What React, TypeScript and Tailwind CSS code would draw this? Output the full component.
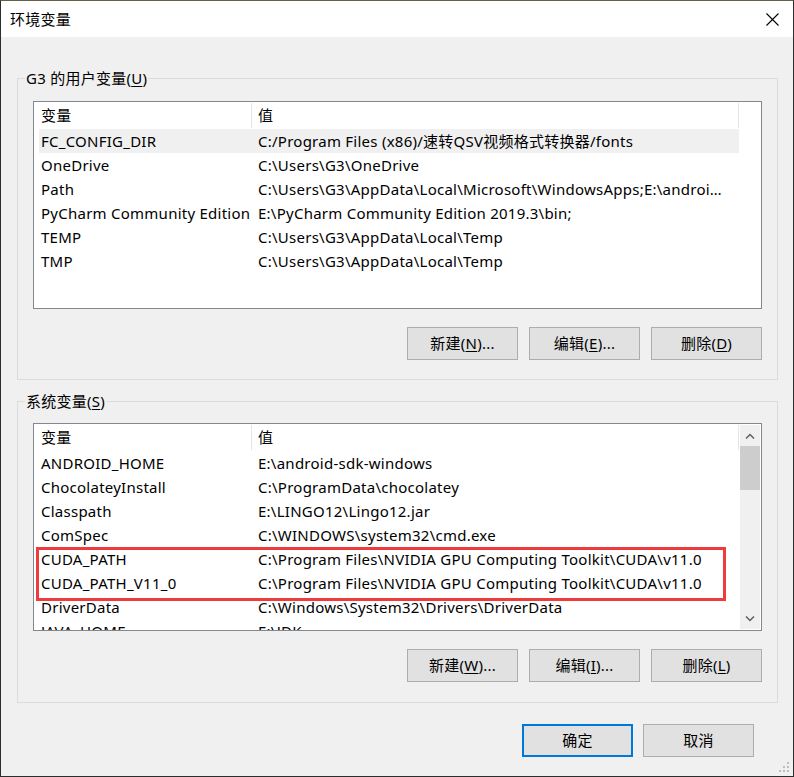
import React from 'react';

const userVars = [
    { name: 'FC_CONFIG_DIR', value: 'C:/Program Files (x86)/速转QSV视频格式转换器/fonts' },
    { name: 'OneDrive', value: 'C:\\Users\\G3\\OneDrive' },
    { name: 'Path', value: 'C:\\Users\\G3\\AppData\\Local\\Microsoft\\WindowsApps;E:\\android-sdk-windows\\platform-tools;C:\\Users\\G3\\AppData' },
    { name: 'PyCharm Community Edition', value: 'E:\\PyCharm Community Edition 2019.3\\bin;' },
    { name: 'TEMP', value: 'C:\\Users\\G3\\AppData\\Local\\Temp' },
    { name: 'TMP', value: 'C:\\Users\\G3\\AppData\\Local\\Temp' },
];

const sysVars = [
    { name: 'ANDROID_HOME', value: 'E:\\android-sdk-windows' },
    { name: 'ChocolateyInstall', value: 'C:\\ProgramData\\chocolatey' },
    { name: 'Classpath', value: 'E:\\LINGO12\\Lingo12.jar' },
    { name: 'ComSpec', value: 'C:\\WINDOWS\\system32\\cmd.exe' },
    { name: 'CUDA_PATH', value: 'C:\\Program Files\\NVIDIA GPU Computing Toolkit\\CUDA\\v11.0' },
    { name: 'CUDA_PATH_V11_0', value: 'C:\\Program Files\\NVIDIA GPU Computing Toolkit\\CUDA\\v11.0' },
    { name: 'DriverData', value: 'C:\\Windows\\System32\\Drivers\\DriverData' },
    { name: 'JAVA_HOME', value: 'E:\\JDK' },
];

function Chevron({ up }: { up?: boolean }) {
    return (
        <svg width="10" height="6" viewBox="0 0 10 6">
            <path
                d={up ? 'M1 5.5 L5 1.5 L9 5.5' : 'M1 0.5 L5 4.5 L9 0.5'}
                fill="none"
                stroke="#606060"
                strokeWidth="1.5"
            />
        </svg>
    );
}

function VarList({
    rows,
    selected,
    scroll,
    children,
}: {
    rows: { name: string; value: string }[];
    selected?: number;
    scroll?: boolean;
    children?: React.ReactNode;
}) {
    return (
        <div className="relative mx-[15px] h-[208px] border border-[#828790] bg-white flex overflow-hidden">
            <div className="w-[705px] shrink-0 flex flex-col">
                {/* Header */}
                <div className="h-[27px] shrink-0 flex">
                    <div className="w-[218px] h-[25px] mt-[1px] border-r border-[#e5e5e5] pl-[7px] flex items-center">变量</div>
                    <div className="flex-1 h-[25px] mt-[1px] border-r border-[#e5e5e5] pl-[6px] flex items-center">值</div>
                </div>
                {rows.map((r, i) => (
                    <div
                        key={r.name}
                        className={`ml-[5px] h-[24px] shrink-0 flex items-center ${i === selected ? 'bg-[#f0f0f0]' : ''}`}
                    >
                        <div className="w-[213px] shrink-0 pl-[2px] whitespace-nowrap overflow-hidden">{r.name}</div>
                        <div className="flex-1 min-w-0 pl-[6px] pr-[8px] whitespace-nowrap overflow-hidden text-ellipsis">{r.value}</div>
                    </div>
                ))}
            </div>
            {scroll ? (
                <div className="w-[20px] my-[1px] ml-[1px] bg-[#f0f0f0] flex flex-col">
                    <div className="h-[21px] flex items-center justify-center">
                        <Chevron up />
                    </div>
                    <div className="h-[44px] bg-[#cdcdcd]" />
                    <div className="flex-1" />
                    <div className="h-[21px] flex items-center justify-center">
                        <Chevron />
                    </div>
                </div>
            ) : null}
            {children}
        </div>
    );
}

function Btn({ label, hot, tail, primary }: { label: string; hot?: string; tail?: string; primary?: boolean }) {
    return (
        <div
            className={`w-[111px] h-[33px] bg-[#e1e1e1] flex items-center justify-center ${
                primary ? 'border-2 border-[#0078d7]' : 'border border-[#adadad]'
            }`}
        >
            <span>
                {label}
                {hot ? (
                    <>
                        (<span className="underline underline-offset-2">{hot}</span>)
                    </>
                ) : null}
                {tail}
            </span>
        </div>
    );
}

function Group({ title, hot, children }: { title: string; hot: string; children: React.ReactNode }) {
    return (
        <div className="border border-[#dcdcdc] flex flex-col">
            <div className="self-start -mt-[11px] ml-[7px] h-[20px] px-[1px] bg-[#f0f0f0] flex items-center leading-none">
                {title}(<span className="underline underline-offset-2">{hot}</span>)
            </div>
            {children}
        </div>
    );
}

export default function App() {
    return (
        <div className="w-[794px] h-[777px] border border-[#2d2d2d] border-t-[#675f46] bg-[#f0f0f0] flex flex-col text-[15px] tracking-[0.25px] text-black font-['Noto_Sans','Noto_Sans_CJK_SC',sans-serif] relative overflow-hidden">
            {/* Title bar */}
            <div className="h-[36px] shrink-0 bg-white flex items-center justify-between pl-[9px] pr-[14px]">
                <span>环境变量</span>
                <svg width="13" height="13" viewBox="0 0 13 13">
                    <path d="M0.5 0.5 L12.5 12.5 M12.5 0.5 L0.5 12.5" stroke="#000" strokeWidth="1.1" />
                </svg>
            </div>

            <div className="flex flex-col pl-[16px] pr-[15px] pt-[41px]">
                <Group title="G3 的用户变量" hot="U">
                    <div className="mt-[13px]">
                        <VarList rows={userVars} selected={0} />
                    </div>
                    <div className="mt-[18px] mr-[15px] pb-[19px] flex justify-end gap-[11px]">
                        <Btn label="新建" hot="N" tail="..." />
                        <Btn label="编辑" hot="E" tail="..." />
                        <Btn label="删除" hot="D" />
                    </div>
                </Group>

                <div className="mt-[21px]">
                    <Group title="系统变量" hot="S">
                        <div className="mt-[12px]">
                            <VarList rows={sysVars} scroll>
                                {/* annotation box */}
                                <div className="absolute left-[2px] top-[123px] w-[690px] h-[54px] border-[3px] border-[#ee3b3b] pointer-events-none" />
                            </VarList>
                        </div>
                        <div className="mt-[18px] mr-[15px] pb-[20px] flex justify-end gap-[11px]">
                            <Btn label="新建" hot="W" tail="..." />
                            <Btn label="编辑" hot="I" tail="..." />
                            <Btn label="删除" hot="L" />
                        </div>
                    </Group>
                </div>

                <div className="mt-[21px] mr-[24px] flex justify-end gap-[10px]">
                    <div className="h-[34px] flex">
                        <Btn label="确定" primary />
                    </div>
                    <div className="h-[34px] flex">
                        <Btn label="取消" />
                    </div>
                </div>
            </div>

            {/* Resize grip */}
            <svg className="absolute right-[2px] bottom-[2px]" width="12" height="12" viewBox="0 0 12 12">
                <g fill="#bdbdbd">
                    <rect x="8" y="0" width="2" height="2" />
                    <rect x="4" y="4" width="2" height="2" />
                    <rect x="8" y="4" width="2" height="2" />
                    <rect x="0" y="8" width="2" height="2" />
                    <rect x="4" y="8" width="2" height="2" />
                    <rect x="8" y="8" width="2" height="2" />
                </g>
            </svg>
        </div>
    );
}
